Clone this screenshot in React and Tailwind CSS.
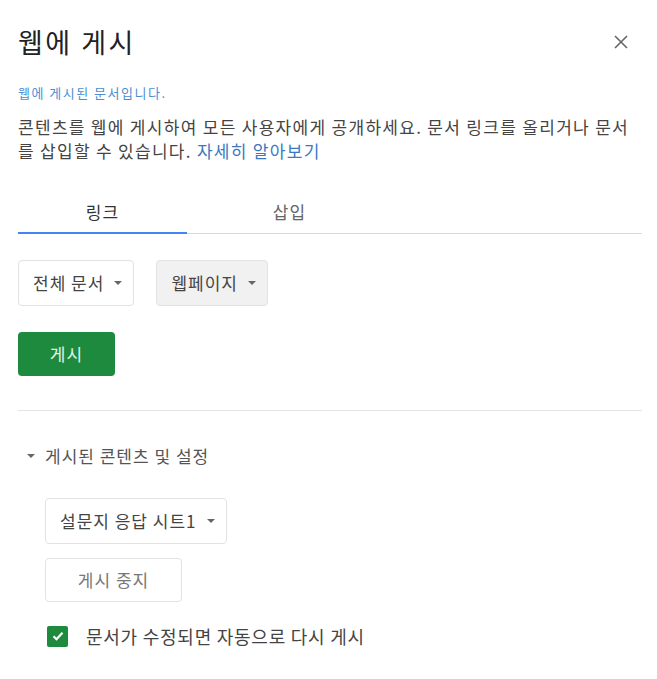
import React, { useState } from "react";

const font = { fontFamily: '"Noto Sans CJK KR", "Noto Sans", sans-serif' };

function Caret() {
  return <span className="ml-[10px] inline-block h-0 w-0 border-x-[4px] border-t-[4px] border-x-transparent border-t-[#666]" />;
}

function Select({ label, gray }) {
  return (
    <button
      className={`flex h-[46px] items-center rounded border border-[#e2e2e2] pl-[14px] pr-[11px] text-[17px] tracking-[1px] text-[#444] ${
        gray ? "bg-[#f1f1f1]" : "bg-white"
      }`}
    >
      {label}
      <Caret />
    </button>
  );
}

export default function App() {
  const [tab, setTab] = useState(0);
  const [auto, setAuto] = useState(true);

  return (
    <div className="h-[679px] w-[657px] bg-white px-[18px] pt-[22px]" style={font}>
      <div className="flex items-center justify-between">
        <h1 className="text-[27px] leading-[40px] tracking-[2.5px] text-[#222]">웹에 게시</h1>
        <button aria-label="닫기" className="mr-[10px] text-[#666]">
          <svg width="16" height="16" viewBox="0 0 16 16" stroke="currentColor" strokeWidth="1.6">
            <path d="M2 2l12 12M14 2L2 14" />
          </svg>
        </button>
      </div>

      <p className="mt-[22px] text-[13px] leading-[18px] tracking-[1.5px] text-[#4a8fd4]">웹에 게시된 문서입니다.</p>
      <p className="mt-[13px] text-[17px] leading-[24px] tracking-[1.3px] text-[#444]">
        콘텐츠를 웹에 게시하여 모든 사용자에게 공개하세요. 문서 링크를 올리거나 문서를 삽입할 수 있습니다.{" "}
        <a href="#" className="text-[#3b78c2]">자세히 알아보기</a>
      </p>

      <div className="mt-[28px] flex w-[624px] border-b border-[#dadada]">
        {["링크", "삽입"].map((t, i) => (
          <button
            key={t}
            onClick={() => setTab(i)}
            className={`-mb-px h-[43px] w-[169px] border-b-2 text-[17px] tracking-[1px] ${
              tab === i ? "border-[#4285f4] text-[#333]" : "border-transparent text-[#666]"
            } ${i === 1 ? "ml-[18px]" : ""}`}
          >
            {t}
          </button>
        ))}
      </div>

      <div className="mt-[26px] flex gap-[22px]">
        <Select label="전체 문서" />
        <Select label="웹페이지" gray />
      </div>

      <button className="mt-[26px] h-[44px] w-[97px] rounded bg-[#1e8a3e] text-[17px] tracking-[1px] text-[#e4f3e8]">
        게시
      </button>

      <div className="mt-[34px] w-[624px] border-t border-[#e3e3e3]" />

      <div className="mt-[33px] flex items-center pl-[9px] text-[17px] leading-[24px] tracking-[1px] text-[#555]">
        <span className="mr-[10px] inline-block h-0 w-0 border-x-[4px] border-t-[4px] border-x-transparent border-t-[#666]" />
        게시된 콘텐츠 및 설정
      </div>

      <div className="ml-[27px] mt-[30px] flex flex-col items-start gap-[14px]">
        <Select label="설문지 응답 시트1" />
        <button className="h-[44px] w-[137px] rounded border border-[#e2e2e2] bg-white text-[17px] tracking-[1px] text-[#777]">
          게시 중지
        </button>
      </div>

      <label className="ml-[29px] mt-[22px] flex items-center gap-[18px] text-[18px] leading-[24px] tracking-[0.75px] text-[#444]">
        <button
          onClick={() => setAuto(!auto)}
          className={`flex h-[21px] w-[21px] items-center justify-center rounded-[2px] ${auto ? "bg-[#1e8a3e]" : "border border-[#999]"}`}
        >
          {auto && (
            <svg width="14" height="14" viewBox="0 0 14 14" fill="none" stroke="white" strokeWidth="2.2">
              <path d="M2.5 7.2l3 3 6-6.4" />
            </svg>
          )}
        </button>
        문서가 수정되면 자동으로 다시 게시
      </label>
    </div>
  );
}
